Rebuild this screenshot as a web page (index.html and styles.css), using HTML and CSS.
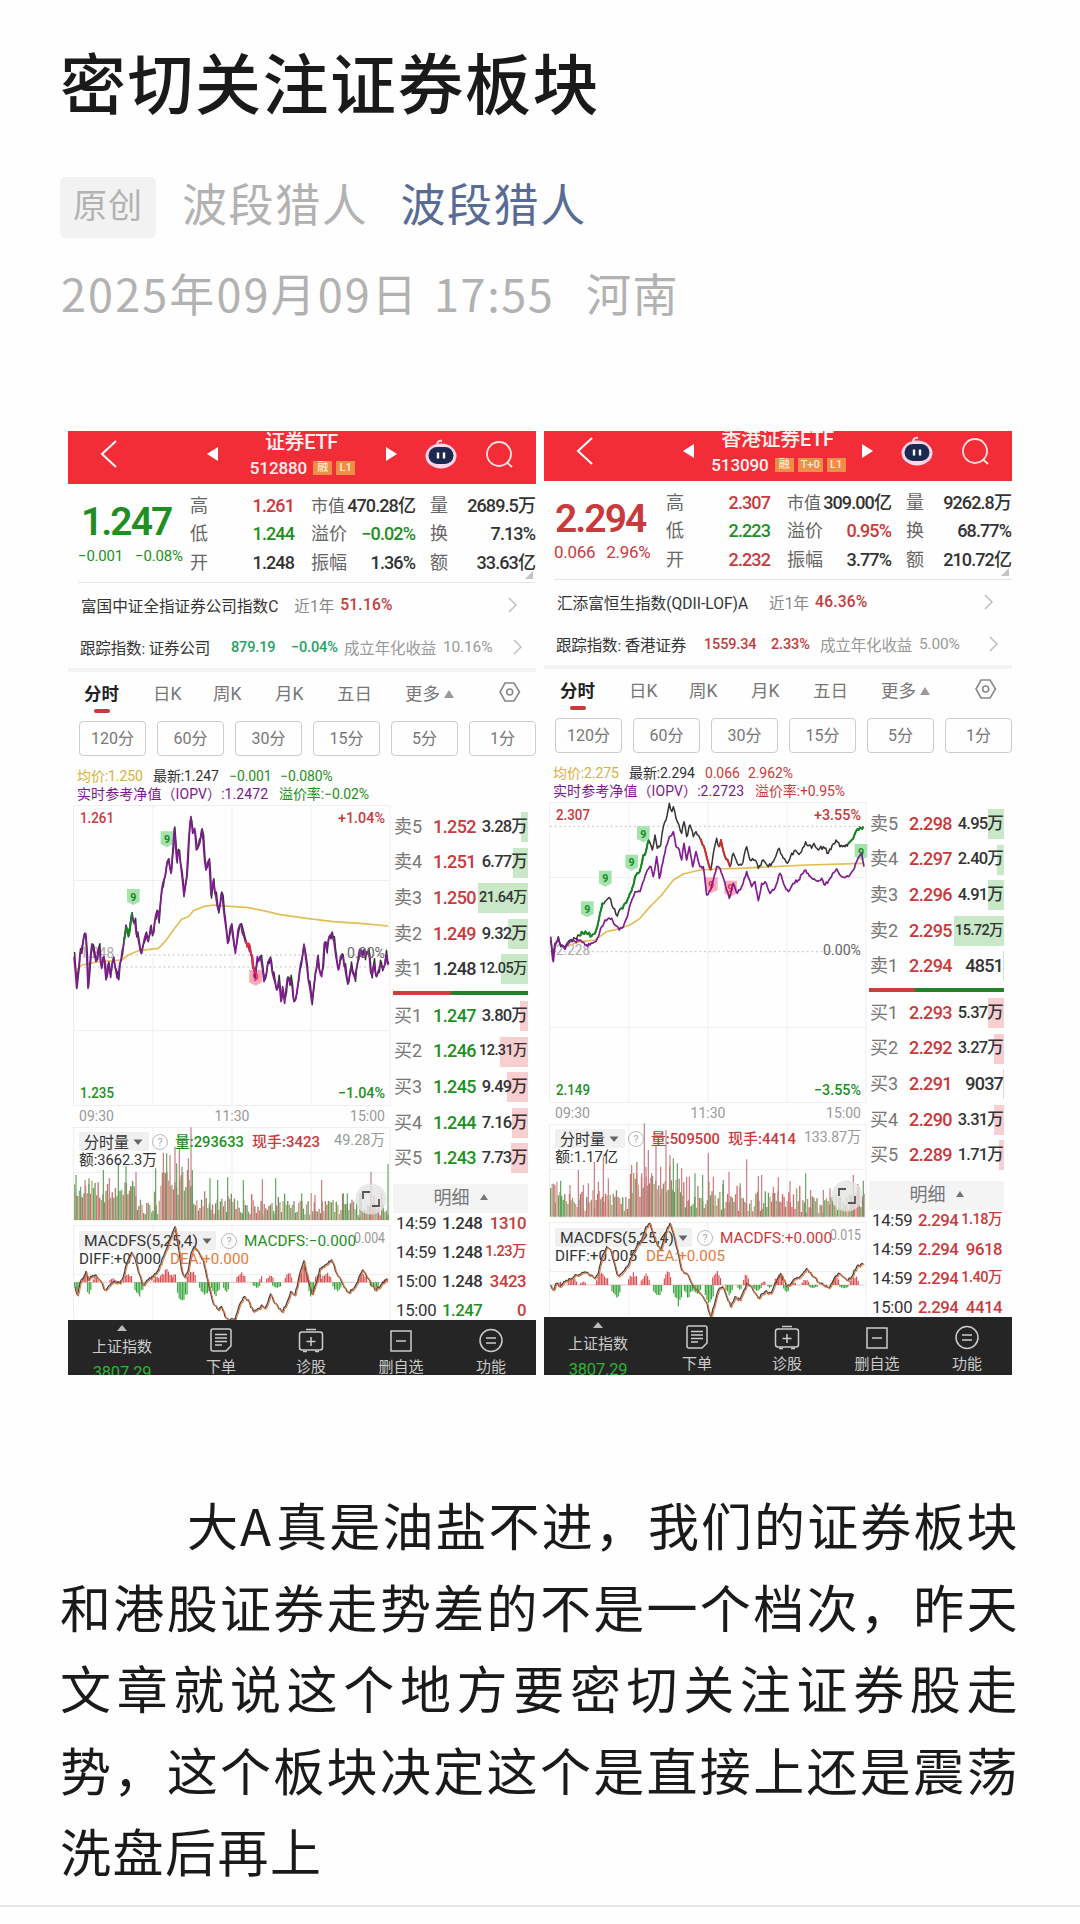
FILE: index.html
```html
<!DOCTYPE html>
<html lang="zh-CN">
<head>
<meta charset="utf-8">
<title>密切关注证券板块</title>
<link rel="stylesheet" href="styles.css">
</head>
<body>
<article class="article">
  <h1 class="title">密切关注证券板块</h1>
  <div class="meta">
    <span class="original">原创</span>
    <span class="author">波段猎人</span>
    <a class="account">波段猎人</a>
  </div>
  <div class="meta-date"><span class="date">2025年09月09日</span><span class="clock">17:55</span><span>河南</span></div>
  <div class="panels" id="panels"></div>
  <p class="body-text">
    <span class="line first">大<span class="latin">A</span>真是油盐不进，我们的证券板块</span>
    <span class="line">和港股证券走势差的不是一个档次，昨天</span>
    <span class="line">文章就说这个地方要密切关注证券股走</span>
    <span class="line">势，这个板块决定这个是直接上还是震荡</span>
    <span class="line last">洗盘后再上</span>
  </p>
</article>
<div class="rule"></div>
<script src="app.js"></script>
</body>
</html>
```
FILE: styles.css
```css
* { box-sizing: border-box; }
body { margin: 0; background: #fefefe; color: #1a1a1a; font-family: "Noto Sans CJK SC", sans-serif; }
.article { height: 1905px; padding: 32px 60px 0; overflow: hidden; }
.title { margin: 0; font-size: 66px; font-weight: 500; line-height: 96px; letter-spacing: 1.5px; }
.meta { display: flex; align-items: center; height: 62px; margin-top: 48px; font-size: 45px; letter-spacing: 1.6px; line-height: 60px; color: #b2b2b2; }
.original { width: 96px; height: 61px; border-radius: 6px; background: #f2f2f2; font-size: 34px; text-align: center; line-height: 54px; letter-spacing: 1px; margin-right: 26px; }
.author, .account { position: relative; top: -4px; }
.author { margin-right: 32px; }
.account { color: #576b95; }
.meta-date { display: flex; height: 60px; margin-top: 25px; font-size: 45px; line-height: 60px; letter-spacing: 1.4px; color: #b2b2b2; }
.date { width: 374px; padding-left: 1px; letter-spacing: 2.1px; }
.clock { width: 152px; letter-spacing: 1.6px; }
.panels { display: flex; gap: 8px; margin: 108px 0 0 8px; height: 944px; }
.body-text { margin: 109px 0 0; font-size: 51px; line-height: 81.6px; letter-spacing: 1.5px; width: 959px; }
.line { display: block; text-align: justify; text-align-last: justify; white-space: nowrap; }
.line.first { padding-left: 127px; }
.latin { letter-spacing: 4.5px; }
.line.last { text-align-last: left; }
.rule { height: 2px; background: #e5e5e5; }

.panel { width: 468px; height: 944px; overflow: hidden; background: #fefefe; font-family: Roboto, "Noto Sans CJK SC", sans-serif; color: #333; }
.screen { height: 944px; display: flex; flex-direction: column; }
.shifted .screen { margin-top: -3px; height: 947px; }
.red { color: #c93a3c; } .green { color: #1f8f24; } .dark { color: #333; } .grey { color: #999; }

.head { flex: none; display: grid; grid-template-columns: 139px 12px 167px 12px 54px 84px; align-items: center; height: 53px; background: #f22d38; color: #fff3f0; }
.head svg { display: block; }
.head .back { margin-left: 32px; margin-top: -8px; }
.head .arrow { margin-top: -8px; }
.head .bot { margin-top: -8px; }
.head .find { margin-left: 34px; margin-top: -6px; }
.name { text-align: center; height: 53px; }
.name b { display: block; font-weight: 500; font-size: 20px; line-height: 25px; margin: -1px 2px 0 0; letter-spacing: -.3px; white-space: nowrap; }
.code { display: flex; justify-content: center; align-items: center; gap: 4px; font-size: 17px; line-height: 26px; font-weight: 500; letter-spacing: -.1px; }
.code i { font-style: normal; font-size: 11px; line-height: 14px; background: #ee8f48; padding: 0 3px; color: #ffe9cf; min-width: 19px; letter-spacing: 0; }
.code span { margin-right: 2px; }

.quote { flex: none; position: relative; display: grid; grid-template-columns: 122px 104px 104px 105px; height: 99px; padding-top: 8px; }
.quote::after { content: ""; position: absolute; left: 10px; right: 0; bottom: 0; height: 1px; background: #e6e6e6; }
.quote::before { content: ""; position: absolute; right: 3px; bottom: 4px; border: 4px solid transparent; border-right-color: #c4c4c4; border-bottom-color: #c4c4c4; }
.quote .stats { display: flex; flex-direction: column; }
.quote .s2 { margin-left: 17px; margin-right: -17px; }
.quote .s3 { margin-left: 32px; margin-right: -32px; }
.stat { display: flex; justify-content: space-between; height: 28.3px; line-height: 28px; font-size: 18px; white-space: nowrap; letter-spacing: -.9px; }
.stat > :first-child { color: #666; letter-spacing: 0; }
.stat > :last-child { font-weight: 500; }
.s2 .stat:first-child > :first-child { font-size: 17px; }
.last b { display: block; font-size: 39px; font-weight: 600; line-height: 44px; margin: 8px 0 0 13px; letter-spacing: -2px; }
.chg { display: flex; gap: 12px; margin-left: 10px; font-size: 15px; line-height: 24px; letter-spacing: -.2px; white-space: nowrap; }
.shifted .chg { font-size: 17px; margin-top: -1px; gap: 11px; letter-spacing: -.3px; }
.shifted .last b { margin-left: 11px; }

.fund { flex: none; display: flex; align-items: center; height: 43px; padding: 0 19px 0 13px; font-size: 15.6px; white-space: nowrap; }
.fund .period { margin-left: 16px; color: #888; }
.shifted .fund .period { margin-left: 21px; }
.fund b { font-weight: 500; margin-left: 6px; letter-spacing: .2px; }
.fund svg { margin-left: auto; }
.index { flex: none; display: grid; grid-template-columns: 151px 60px 53px 99px 1fr auto; align-items: center; height: 42px; padding: 0 14px 0 12px; font-size: 15.5px; white-space: nowrap; letter-spacing: -.15px; }
.index .val { font-weight: 500; font-size: 14.5px; }
.index .green { color: #23a463; }
.shifted .index .v1 { margin-left: -3px; }
.shifted .index .v2 { margin-left: 4px; }
.band { flex: none; height: 4px; background: #f3f3f3; }

.tabs { flex: none; display: grid; grid-template-columns: 69px 60px 62px 62px 68px 94px auto; align-items: center; height: 40px; margin-bottom: 2px; padding-left: 16px; font-size: 17.5px; color: #777; }
.tabs b { position: relative; font-weight: 700; color: #222; }
.tabs b::after { content: ""; position: absolute; left: 10px; bottom: -8px; width: 16px; height: 4px; border-radius: 2px; background: #c93a3c; }
.tabs i { display: inline-block; border: 5px solid transparent; border-bottom: 8px solid #999; border-top: 0; margin: 0 0 2px 4px; }
.mins { flex: none; display: flex; justify-content: space-between; margin: 7px 0 0 11px; height: 35px; }
.mins span { width: 67px; border: 1px solid #ccc; border-radius: 4px; text-align: center; font-size: 16px; line-height: 33px; color: #777; }

.info { flex: none; margin: 12px 0 0 9px; height: 35px; font-size: 14px; line-height: 17.5px; white-space: nowrap; letter-spacing: -.1px; }
.info div { display: flex; }
.info .avg { width: 76px; color: #d8b03c; } .info .now { width: 76px; } .info .d { width: 51px; }
.info .iopv { width: 202px; color: #7a1a8c; letter-spacing: .08px; }
.shifted .info .d { width: 43px; }

.trade { flex: none; display: grid; grid-template-columns: 325px 135px; height: 517px; }
.chart { display: block; width: 325px; height: 517px; }
.book { padding-top: 6px; }
.order { position: relative; display: grid; grid-template-columns: 41px 44px 1fr; align-items: center; height: 35.6px; font-size: 18px; line-height: 30px; padding-right: 1px; letter-spacing: -.1px; }
.order > :first-child { color: #777; margin-left: 1px; }
.order .p { font-weight: 500; letter-spacing: -.6px; margin-left: -1px; }
.order .v { text-align: right; font-size: 16.5px; font-weight: 500; letter-spacing: -.8px; white-space: nowrap; }
.order .v.long { font-size: 14.5px; letter-spacing: -.6px; }
.order .v.count { font-size: 18px; }
.depth { position: absolute; right: 0; top: 3px; height: 30px; background: #c8e8c8; }
.buy .depth { background: #f8cfd1; }
.order > span { position: relative; }
.split { display: flex; height: 4px; margin: 4px 0 3px; background: #20832a; }
.split i { background: #c9403f; }
.detail { height: 29px; margin-top: 8px; background: #f4f4f5; color: #777; font-size: 18px; line-height: 28px; text-align: center; }
.detail i { display: inline-block; border: 4px solid transparent; border-top: 0; border-bottom: 6px solid #777; margin: 0 0 4px 10px; }
.tick { display: grid; grid-template-columns: 46px 40px 1fr; height: 29px; line-height: 20px; font-size: 16.8px; letter-spacing: -.5px; padding: 0 2px 0 3px; white-space: nowrap; }
.tick > :last-child { text-align: right; }
.tick .small { font-size: 14.5px; }
.tick span { font-weight: 500; }
.tick > :first-child { font-weight: 400; letter-spacing: -.3px; }

.nav { flex: 1; display: grid; grid-template-columns: 108px 90px 90px 90px 90px; background: #252525; color: #ccc; font-size: 15px; text-align: center; overflow: hidden; }
.nav > div { display: flex; flex-direction: column; align-items: center; padding-top: 8px; line-height: 22px; white-space: nowrap; }
.nav svg { flex: none; margin-bottom: 3px; }
.nav .idx { padding-top: 5px; }
.nav .idx i { border: 5px solid transparent; border-top: 0; border-bottom: 6px solid #bbb; }
.nav .idx span { margin-top: 5px; }
.nav .idx b { font-weight: 400; font-size: 16.5px; color: #2fb335; margin-top: 4px; letter-spacing: -.2px; }
```
FILE: app.js
```js
const RED = '#c93a3c', GREEN = '#1f8f24';
const pts = s => s.trim().split(/\s+/).map(p => p.split(',').map(Number));

const data = [
  {
    name: '证券ETF', code: '512880', tags: ['融', 'L1'], last: '1.247', lastCls: 'green', chg: ['−0.001', '−0.08%'],
    stats: [[['高', '1.261', 'red'], ['低', '1.244', 'green'], ['开', '1.248', 'dark']],
      [['市值', '470.28亿', 'dark'], ['溢价', '−0.02%', 'green'], ['振幅', '1.36%', 'dark']],
      [['量', '2689.5万', 'dark'], ['换', '7.13%', 'dark'], ['额', '33.63亿', 'dark']]],
    fund: '富国中证全指证券公司指数C', year: '51.16%', index: '证券公司', iv: ['879.19', '−0.04%'], ivCls: 'green', annual: '10.16%',
    avg: '1.250', d: ['−0.001', '−0.080%'], iopv: '1.2472', prem: '−0.02%', dCls: 'green', premCls: 'green',
    sell: [['1.252', '3.28万', 7], ['1.251', '6.77万', 15], ['1.250', '21.64万', 50], ['1.249', '9.32万', 20], ['1.248', '12.05万', 27, 'dark']],
    buy: [['1.247', '3.80万', 8], ['1.246', '12.31万', 28], ['1.245', '9.49万', 21], ['1.244', '7.16万', 16], ['1.243', '7.73万', 17]],
    buyCls: 'green', split: 43,
    ticks: [['14:59', '1.248', '1310'], ['14:59', '1.248', '1.23万'], ['15:00', '1.248', '3423'], ['15:00', '1.247', '0']],
    tickCls: ['dark', 'dark', 'dark', 'green'],
    hi: '1.261', lo: '1.235', base: '1.248', pct: '1.04%',
    vol: '293633', hand: '3423', volMax: '49.28万', amt: '3662.3万', amtW: 78, volCls: GREEN,
    macd: '−0.000', macdMax: '0.004', diff: '+0.000', macdCls: GREEN,
    price: { ox: -8, oy: 359, dash: [495, 531], blackFrom: null,
      purple: pts('42,500 50,595 60,490 68,460 77,430 84,595 95,465 108,515 118,475 125,535 132,500 138,570 145,520 152,562 160,505 168,545 175,560 183,510 190,470 198,405 205,440 215,372 222,400 232,430 245,490 258,430 265,455 272,410 280,430 290,365 296,390 305,300 315,260 325,210 333,250 343,115 350,210 357,185 372,320 380,260 386,150 393,80 398,130 404,115 409,180 418,150 425,120 438,240 447,210 453,315 460,270 475,360 484,310 492,370 503,460 514,405 526,490 534,420 543,405 556,455 565,465 575,500 585,565 592,500 603,510 612,575 622,530 630,505 640,560 650,600 656,570 663,635 668,590 674,640 682,565 692,570 700,625 706,630 715,575 722,520 732,462 745,570 755,635 765,560 773,500 785,560 793,460 800,480 808,440 815,430 825,480 835,540 845,495 855,535 865,580 873,530 885,565 895,500 905,480 915,500 925,490 935,555 942,520 950,560 960,525 970,535 978,495 985,525'),
      yellow: '50,540 65,525 110,516 185,510 205,495 235,482 295,475 315,455 340,420 365,388 385,380 400,362 430,350 460,345 510,349 560,352 610,362 660,374 740,385 820,395 900,400 985,408',
      marks: [[220, 320, 0], [321, 147, 0], [587, 562, 1]], segs: [[190, 218, '#128a20'], [556, 588, '#dd2f3c']] },
    volume: { ox: -8, oy: 659, base: 390, x0: 44, low: 45, red: .5, seed: 7,
      spikes: pts('48,255 62,290 75,270 87,265 130,240 148,265 175,218 198,228 212,290 228,245 287,235 310,188 320,190 330,195 345,170 350,220 358,175 366,230 385,205 393,112 397,240 450,265 473,270 503,262 550,270 607,268 647,265 725,310 765,315 785,270 850,310 862,310 900,310 933,245 965,310 984,222'),
      dense: [[44, 230, 60], [300, 400, 90], [880, 990, -10]] },
    md: { zero: 577, line: '45,590 52,615 60,580 70,565 78,545 85,570 95,560 105,555 120,570 135,600 150,585 165,575 180,580 190,560 200,520 215,487 225,505 235,545 250,585 262,570 280,560 295,540 310,500 325,460 345,410 355,470 365,540 375,562 385,540 393,490 402,470 412,480 430,510 440,560 450,600 460,640 475,660 485,650 495,680 510,690 525,690 535,655 550,622 565,630 580,665 595,655 605,645 615,655 632,612 645,640 665,665 680,640 692,605 705,615 715,570 732,512 745,570 757,612 770,575 780,535 795,525 815,510 830,550 845,575 865,607 885,590 908,540 925,565 945,600 960,590 982,565',
      hist: [[52, -30, 8], [77, 38, 9], [88, -45, 5], [108, 18, 8], [160, 14, 10], [205, 34, 14], [237, -48, 12], [292, 22, 10], [320, 48, 18], [343, 34, 6], [368, -76, 15], [394, 44, 12], [435, -50, 16], [468, -45, 14], [500, -40, 9], [543, 38, 12], [590, -20, 10], [604, 20, 4], [630, 28, 10], [652, -24, 14], [686, 36, 10], [732, 56, 12], [756, -58, 9], [775, 38, 8], [800, 32, 16], [833, -36, 14], [908, 34, 12], [945, -24, 14], [976, 10, 8]] }
  },
  {
    name: '香港证券ETF', code: '513090', tags: ['融', 'T+0', 'L1'], last: '2.294', lastCls: 'red', chg: ['0.066', '2.96%'],
    stats: [[['高', '2.307', 'red'], ['低', '2.223', 'green'], ['开', '2.232', 'red']],
      [['市值', '309.00亿', 'dark'], ['溢价', '0.95%', 'red'], ['振幅', '3.77%', 'dark']],
      [['量', '9262.8万', 'dark'], ['换', '68.77%', 'dark'], ['额', '210.72亿', 'dark']]],
    fund: '汇添富恒生指数(QDII-LOF)A', year: '46.36%', index: '香港证券', iv: ['1559.34', '2.33%'], ivCls: 'red', annual: '5.00%',
    avg: '2.275', d: ['0.066', '2.962%'], iopv: '2.2723', prem: '+0.95%', dCls: 'red', premCls: 'red',
    sell: [['2.298', '4.95万', 16], ['2.297', '2.40万', 7], ['2.296', '4.91万', 16], ['2.295', '15.72万', 50], ['2.294', '4851', 1]],
    buy: [['2.293', '5.37万', 16], ['2.292', '3.27万', 10], ['2.291', '9037', 1], ['2.290', '3.31万', 10], ['2.289', '1.71万', 5]],
    buyCls: 'red', split: 34,
    ticks: [['14:59', '2.294', '1.18万'], ['14:59', '2.294', '9618'], ['14:59', '2.294', '1.40万'], ['15:00', '2.294', '4414']],
    tickCls: ['red', 'red', 'red', 'red'],
    hi: '2.307', lo: '2.149', base: '2.228', pct: '3.55%',
    vol: '509500', hand: '4414', volMax: '133.87万', amt: '1.17亿', amtW: 63, volCls: RED,
    macd: '+0.000', macdMax: '0.015', diff: '+0.005', macdCls: RED,
    price: { ox: -4, oy: 242, dash: [469, 845],
      black: pts('32,810 38,870 45,820 55,800 62,830 75,835 90,810 105,805 118,797 125,785 140,790 155,798 165,790 172,770 180,730 187,700 200,690 212,688 220,715 232,738 245,715 255,700 262,690 270,670 278,650 285,620 295,610 303,590 310,555 318,545 326,510 337,540 345,495 352,535 362,525 370,470 378,450 388,400 396,425 400,410 412,455 425,490 432,455 440,500 450,465 460,500 468,485 480,505 495,540 512,600 520,550 530,505 537,530 543,510 555,560 570,590 580,550 592,580 605,585 620,530 630,570 645,570 655,595 670,570 685,590 700,575 718,535 730,565 742,580 755,550 770,545 780,550 797,515 815,535 822,520 835,540 850,530 865,550 888,510 900,530 915,530 925,520 935,510 945,490 960,472 970,470'),
      purple: pts('32,800 40,875 45,830 55,805 62,825 75,838 90,815 105,815 120,810 135,825 150,825 165,815 175,800 185,770 195,750 215,745 225,765 238,780 250,770 262,740 272,700 285,665 300,665 312,630 322,600 333,590 340,620 350,560 358,625 368,580 378,530 388,500 400,485 408,530 418,540 425,570 432,520 440,570 448,530 458,590 468,545 480,590 490,590 500,675 512,660 520,630 530,590 540,595 555,640 568,685 580,640 592,670 605,650 620,605 635,650 645,635 655,692 665,640 675,635 690,670 705,655 720,610 735,650 745,665 760,640 775,630 797,600 815,625 830,632 845,625 855,645 870,625 890,597 905,620 925,620 940,600 950,575 965,550 972,590'),
      yellow: '90,825 120,815 165,810 200,785 230,778 270,765 300,745 330,710 365,675 400,630 430,612 480,600 530,597 600,595 700,590 800,585 970,580',
      marks: [[142, 717, 0], [196, 625, 0], [275, 577, 0], [310, 492, 0], [963, 545, 0], [514, 645, 1], [572, 655, 1]],
      segs: [[115, 192, '#128a20'], [240, 328, '#128a20'], [925, 971, '#128a20'], [480, 514, '#c9302c'], [537, 573, '#c9302c']] },
    volume: { ox: -4, oy: 662, base: 380, x0: 32, low: 62, red: .6, seed: 23,
      spikes: pts('45,285 62,272 90,285 115,240 130,285 145,280 163,215 175,275 190,200 205,265 275,225 290,250 305,250 313,100 318,230 325,180 335,250 348,165 362,230 378,120 390,195 400,205 412,220 425,235 440,260 448,260 465,250 488,255 505,190 520,260 550,270 567,245 600,290 620,208 655,258 665,255 700,290 715,262 750,272 797,250 812,300 850,300 870,295 940,255 957,290 970,272'),
      dense: [[270, 430, 75], [150, 190, 20], [770, 900, -15]] },
    md: { zero: 585, line: '32,585 40,600 50,580 60,590 75,575 95,565 110,555 130,548 145,550 163,565 175,550 185,505 200,470 212,480 220,510 232,555 245,550 262,530 275,500 290,470 305,450 318,410 330,400 345,450 362,480 375,430 390,400 400,430 412,480 425,540 440,550 455,580 470,600 485,615 498,635 512,680 522,650 535,600 548,590 560,620 572,650 585,620 600,630 620,580 635,590 655,625 675,605 692,610 705,580 722,550 740,590 760,570 780,560 800,535 820,560 840,580 870,590 885,560 895,550 920,570 935,560 950,530 970,522',
      hist: [[60, 12, 8], [98, 24, 12], [130, 12, 8], [187, 46, 17], [228, -48, 12], [280, 44, 14], [318, 36, 14], [355, -44, 14], [383, 48, 10], [415, -70, 14], [445, -42, 12], [470, -34, 12], [510, -70, 14], [530, 56, 12], [568, -34, 10], [600, -16, 6], [620, 40, 9], [652, -22, 12], [672, 16, 7], [690, -10, 6], [720, 42, 14], [740, -26, 9], [760, 14, 8], [797, 20, 10], [820, -12, 12], [888, 38, 11], [912, -14, 12], [945, 30, 14]] }
  }
];

function rng(seed) { let s = seed * 9301 + 7; return () => (s = (s * 16807) % 2147483647) / 2147483647; }

// Adds small tick-by-tick moves between the key prices of a line.
function jag(list, amp, seed) {
  const r = rng(seed), out = [list[0]];
  for (let i = 1; i < list.length; i++) {
    const [a, b] = list[i - 1], [c, d] = list[i], n = Math.max(1, Math.round((c - a) / 4));
    for (let k = 1; k < n; k++) out.push([a + (c - a) * k / n, b + (d - b) * k / n + (r() - .5) * amp]);
    out.push([c, d]);
  }
  return out;
}
const str = l => l.map(p => p[0].toFixed(1) + ',' + p[1].toFixed(1)).join(' ');
const line = (l, c, w) => `<polyline points="${typeof l === 'string' ? l : str(l)}" fill="none" stroke="${c}" stroke-width="${w}" stroke-linejoin="round"/>`;
const text = (x, cy, s, size, color, w, anchor = 'start', weight = 400) =>
  `<text x="${x}" y="${cy + size * .355}" font-size="${size}" fill="${color}" font-weight="${weight}" text-anchor="${anchor}" textLength="${w}" lengthAdjust="spacingAndGlyphs">${s}</text>`;
const group = (o, body) => `<g transform="translate(${o.ox} ${o.oy}) scale(.33333)">${body}</g>`;

function grid() {
  let s = '';
  [374, 449, 599, 674, 696, 741, 789, 794, 843].forEach(y => s += `<path d="M5.5 ${y + .5}H322"/>`);
  [[5.5], [85], [164], [243], [322]].forEach(([x]) => s += `<path d="M${x} 374V674M${x} 696V789M${x} 794V888"/>`);
  return `<g stroke="#efefef" fill="none">${s}</g>`;
}

function priceLines(p) {
  const purple = jag(p.purple, p.black ? 10 : 26, 5);
  const black = p.black ? jag(p.black, 13, 3) : purple.map((q, i) => [q[0] + 1.5, q[1] + (i % 5 === 0 ? -14 : i % 3 === 0 ? 9 : -4)]);
  let s = p.dash.map(y => `<path d="M${p.black ? 30 : 44} ${y}H${p.black ? 970 : 985}" stroke="#bbb" stroke-width="2.5" stroke-dasharray="6 8"/>`).join('');
  s += line(p.yellow, '#e3bd55', 5);
  s += p.marks.map(([x, y, down]) => `<path d="M${x - 19} ${y - 23}h38v38l-19 10l-19 -10z" fill="${down ? '#fba9b8' : '#a5e2ae'}"/><text x="${x}" y="${y + 12}" font-size="32" font-weight="700" text-anchor="middle" fill="${down ? '#e0334c' : '#128a20'}">9</text>`).join('');
  s += line(black, '#333', 4.5);
  if (!p.black) s += line(purple, '#801b91', 5);
  s += p.segs.map(([a, b, c]) => line(black.filter(q => q[0] >= a && q[0] <= b), c, 6)).join('');
  if (p.black) s += line(purple, '#801b91', 5);
  return group(p, s);
}

function volumeBars(v) {
  const r = rng(v.seed), colors = ['#d0696b', '#cf9a86', '#a58a70'], greens = ['#58a552', '#8fae72', '#8b8565'];
  let s = '';
  for (let x = v.x0; x < v.x0 + 942; x += 4.7) {
    let h = 16 + r() * v.low + (r() > .8 ? 28 : 0);
    v.dense.forEach(([a, b, e]) => { if (x >= a && x <= b) h += e * (.35 + r() * .65); });
    const set = r() < v.red ? colors : greens;
    s += `<path d="M${x.toFixed(1)} ${v.base}v${-Math.max(8, h).toFixed(0)}" stroke="${set[Math.floor(r() * 3)]}" stroke-width="4"/>`;
  }
  v.spikes.forEach(([x, y]) => { s += `<path d="M${x} ${v.base}V${y}" stroke="${r() < v.red ? '#c8757a' : '#5d9f5b'}" stroke-width="3.4"/>`; });
  return group(v, s);
}

function macdLines(d) {
  const r = rng(31);
  let s = `<path d="M${d.volume.x0} ${d.md.zero}H${d.volume.x0 + 942}" stroke="#e3a6a0" stroke-width="2"/>`;
  d.md.hist.forEach(([x, h, w]) => {
    for (let k = -w; k <= w; k += 4.7) {
      const f = (1 - Math.abs(k) / (w + 5) * .7) * (.65 + r() * .35);
      s += `<path d="M${x + k} ${d.md.zero}v${(-h * f).toFixed(1)}" stroke="${h > 0 ? '#d84a4e' : '#32a336'}" stroke-width="3.4"/>`;
    }
  });
  const l = jag(pts(d.md.line), 9, 11);
  return group(d.volume, s + line(l, '#444', 4) + line(l.map(q => [q[0] + 3, q[1] + 3]), '#dc7a45', 3.2));
}

const help = (x, y) => `<circle cx="${x}" cy="${y}" r="7.5" fill="none" stroke="#bbb"/>` + text(x, y, '?', 11, '#aaa', 5, 'middle');
const down = (x, y) => `<path d="M${x - 4.5} ${y - 2.5}h9l-4.5 5.5z" fill="#666"/>`;

function chart(d) {
  return `<svg class="chart" viewBox="0 372 325 517">
    ${grid()}
    ${text(12, 387, d.hi, 15, RED, 34, 'start', 500)}${text(317, 387, '+' + d.pct, 15, RED, 47, 'end', 500)}
    ${text(12, 662, d.lo, 15, GREEN, 34, 'start', 500)}${text(317, 662, '−' + d.pct, 15, GREEN, 47, 'end', 500)}
    ${text(12, 522, d.base, 14.5, '#aaa', 34)}
    ${priceLines(d.price)}
    ${text(317, 522, '0.00%', 14.5, '#666', 38, 'end')}
    ${text(11, 685, '09:30', 15, '#999', 35)}${text(164, 685, '11:30', 15, '#999', 35, 'middle')}${text(317, 685, '15:00', 15, '#999', 35, 'end')}
    <rect x="11" y="701" width="70" height="19" rx="2" fill="#f0f0f1"/>
    <rect x="11" y="800" width="137" height="19" rx="2" fill="#f0f0f1"/>
    ${volumeBars(d.volume)}
    ${text(16, 711, '分时量', 15.5, '#333', 45)}${down(70, 711)}${help(92, 711)}
    ${text(107, 711, '量:' + d.vol, 15, d.volCls, 69, 'start', 500)}${text(184, 711, '现手:' + d.hand, 15, RED, 68, 'start', 500)}
    ${text(317, 708.5, d.volMax, 14.5, '#999', d.volMax.length > 6 ? 57 : 51, 'end')}
    ${text(11, 728.5, '额:' + d.amt, 15, '#333', d.amtW)}
    <circle cx="303" cy="768" r="15.5" fill="#e4e4e4" opacity=".8"/><path d="M295 768v-7h7M311 768v7h-7" fill="none" stroke="#555" stroke-width="1.8"/>
    ${text(16, 810, 'MACDFS(5,25,4)', 15, '#333', 114)}${down(139, 810)}${help(161, 810)}
    ${text(317, 807, d.macdMax, 14.5, '#999', 31, 'end')}
    ${text(176, 810, 'MACDFS:' + d.macd, 15, d.macdCls, 112)}
    ${text(11, 827.5, 'DIFF:' + d.diff, 15, '#333', 82)}${text(102, 827.5, 'DEA:' + d.diff, 15, '#e8793c', 79)}
    ${macdLines(d)}
  </svg>`;
}

const chevron = '<svg width="9" height="16" viewBox="0 0 9 16" fill="none" stroke="#bbb" stroke-width="1.4"><path d="M1 1l7 7-7 7"/></svg>';
const icon = body => `<svg width="26" height="25" viewBox="0 0 26 25" fill="none" stroke="#ccc" stroke-width="1.5">${body}</svg>`;
const icons = {
  '下单': '<path d="M5 1h16a2 2 0 0 1 2 2v15l-5 5H5a2 2 0 0 1-2-2V3a2 2 0 0 1 2-2zM7 6.500h12M7 10h12M7 13.500h12M7 17h7"/>',
  '诊股': '<rect x="1.500" y="4" width="23" height="18" rx="2.500"/><path d="M8 1.500h10M13 9v9M8.500 13.500h9M5 23.500h4M17 23.500h4"/>',
  '删自选': '<rect x="3" y="3" width="20" height="20"/><path d="M8 13h10"/>',
  '功能': '<circle cx="13" cy="12.500" r="11"/><path d="M8 10h10M8 15h10"/>'
};

function order(label, [p, v, w, own], cls, side) {
  const size = v.length > 5 ? 'long' : v.length === 4 ? 'count' : '';
  return `<div class="order ${side}"><span>${label}</span><i class="depth" style="width:${w}px"></i><span class="p ${own || cls}">${p}</span><span class="v ${size}">${v}</span></div>`;
}

function panel(d, i) {
  return `<section class="panel ${i ? 'shifted' : ''}"><div class="screen">
  <header class="head">
    <svg class="back" width="18" height="28" viewBox="0 0 18 28" fill="none" stroke="#fff" stroke-width="2"><path d="M16 1L2 14l14 13"/></svg>
    <svg class="arrow" width="12" height="16"><path d="M11 1v14L0 8z" fill="#fff"/></svg>
    <div class="name"><b>${d.name}</b><div class="code"><span>${d.code}</span>${d.tags.map(t => `<i>${t}</i>`).join('')}</div></div>
    <svg class="arrow" width="12" height="16"><path d="M0 1v14L11 8z" fill="#fff"/></svg>
    <svg class="bot" width="64" height="32" viewBox="0 0 64 32"><path d="M39 6q1-4 5-3" fill="none" stroke="#ffd9e6" stroke-width="2"/><ellipse cx="43" cy="18" rx="15.500" ry="12.500" fill="#fbd7e8"/><rect x="30.500" y="9" width="25" height="17" rx="8.500" fill="#1c2850"/><path d="M40 14.500v6M46 14.500v6" stroke="#fff" stroke-width="2.400"/></svg>
    <svg class="find" width="28" height="28" viewBox="0 0 28 28" fill="none" stroke="#ffe3e0" stroke-width="1.800"><circle cx="13" cy="13" r="12"/><path d="M21 21.500l5 4.500"/></svg>
  </header>
  <div class="quote">
    <div class="last ${d.lastCls}"><b>${d.last}</b><div class="chg"><span>${d.chg[0]}</span><span>${d.chg[1]}</span></div></div>
    ${d.stats.map((c, k) => `<div class="stats s${k + 1}">${c.map(s => `<div class="stat"><span>${s[0]}</span><span class="${s[2]}">${s[1]}</span></div>`).join('')}</div>`).join('')}
  </div>
  <div class="fund"><span>${d.fund}</span><span class="period">近1年</span><b class="red">${d.year}</b>${chevron}</div>
  <div class="index"><span>跟踪指数: ${d.index}</span><span class="val v1 ${d.ivCls}">${d.iv[0]}</span><span class="val v2 ${d.ivCls}">${d.iv[1]}</span><span class="grey">成立年化收益</span><span class="grey">${d.annual}</span>${chevron}</div>
  <div class="band"></div>
  <div class="tabs"><b>分时</b><span>日K</span><span>周K</span><span>月K</span><span>五日</span><span>更多<i></i></span><svg width="22" height="20" viewBox="0 0 22 20" fill="none" stroke="#888" stroke-width="1.600"><path d="M6 1h9l5.500 9-5.500 9H6L1 10z"/><circle cx="10.700" cy="10" r="3"/></svg></div>
  <div class="mins">${['120', '60', '30', '15', '5', '1'].map(m => `<span>${m}分</span>`).join('')}</div>
  <div class="info"><div><span class="avg">均价:${d.avg}</span><span class="now">最新:${d.last}</span><span class="d ${d.dCls}">${d.d[0]}</span><span class="${d.dCls}">${d.d[1]}</span></div>
    <div><span class="iopv">实时参考净值（IOPV）:${d.iopv}</span><span class="${d.premCls}">溢价率:${d.prem}</span></div></div>
  <div class="trade">${chart(d)}
    <div class="book">
      ${d.sell.map((o, k) => order('卖' + (5 - k), o, 'red', 'sell')).join('')}
      <div class="split"><i style="width:${d.split}%"></i></div>
      ${d.buy.map((o, k) => order('买' + (k + 1), o, d.buyCls, 'buy')).join('')}
      <div class="detail">明细<i></i></div>
      ${d.ticks.map((t, k) => `<div class="tick"><span>${t[0]}</span><span class="${d.tickCls[k]}">${t[1]}</span><span class="red ${t[2].length > 4 ? 'small' : ''}">${t[2]}</span></div>`).join('')}
    </div>
  </div>
  <nav class="nav"><div class="idx"><i></i><span>上证指数</span><b>3807.29</b></div>${Object.keys(icons).map(k => `<div>${icon(icons[k])}<span>${k}</span></div>`).join('')}</nav>
  </div></section>`;
}

document.getElementById('panels').innerHTML = data.map(panel).join('');
```
